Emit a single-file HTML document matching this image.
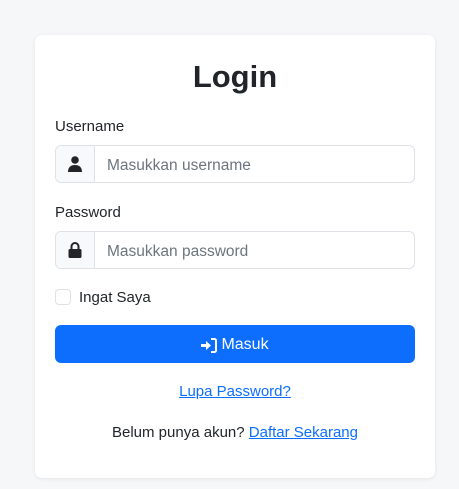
<!DOCTYPE html>
<html><head><style>
*{box-sizing:border-box;margin:0;padding:0}
body{width:459px;height:489px;background:#f6f7f9;font-family:"Liberation Sans",sans-serif;color:#212529;font-size:15px;position:relative;overflow:hidden}
.card{position:absolute;left:35px;top:35px;width:400px;height:443px;background:#fff;border-radius:7px;box-shadow:0 1px 4px rgba(0,0,0,.08)}
.abs{position:absolute}
h1{position:absolute;left:0;width:400px;text-align:center;font-size:31px;font-weight:bold;line-height:40px}
.lbl{position:absolute;left:20px;font-size:15px;line-height:20px}
.ig{position:absolute;left:20px;width:360px;height:38px;border:1px solid #dee2e6;border-radius:6px;display:flex;overflow:hidden}
.ig .ic{width:39px;background:#f8f9fa;border-right:1px solid #dee2e6;display:flex;align-items:center;justify-content:center}
.ig .ph{padding-left:12px;padding-top:2px;line-height:36px;color:#6c757d;font-size:15.5px}
.btn{position:absolute;left:20px;top:290px;width:360px;height:38px;background:#0d6efd;border-radius:6px;color:#fff;display:flex;align-items:center;justify-content:center;font-size:16px;gap:4px;padding-top:2px}
a{color:#0d6efd;text-decoration:underline}
.c{position:absolute;left:0;width:400px;text-align:center;font-size:15px;line-height:20px}
</style></head><body>
<div class="card">
<h1 style="top:22px">Login</h1>
<div class="lbl" style="top:82px">Username</div>
<div class="ig" style="top:110px"><div class="ic"><svg width="14" height="16" viewBox="0 0 14 16"><circle cx="7" cy="4" r="3.8" fill="#212529"/><path d="M0 16C0 11 3 9 7 9s7 2 7 7z" fill="#212529"/></svg></div><div class="ph">Masukkan username</div></div>
<div class="lbl" style="top:168px">Password</div>
<div class="ig" style="top:196px"><div class="ic"><svg width="14" height="16" viewBox="0 0 14 16"><path d="M3.5 7V4.5a3.5 3.5 0 0 1 7 0V7" stroke="#212529" stroke-width="2" fill="none"/><rect x="0.5" y="7" width="13" height="9" rx="1.5" fill="#212529"/></svg></div><div class="ph">Masukkan password</div></div>
<div class="abs" style="left:20px;top:254px;width:16px;height:16px;border:1px solid #dee2e6;border-radius:4px"></div>
<div class="abs" style="left:44px;top:253px;font-size:15px;line-height:20px">Ingat Saya</div>
<div class="btn"><svg width="16" height="15" viewBox="0 0 16 15"><path d="M0 6h5V3l5 4.5-5 4.5V9H0z" fill="#fff"/><path d="M10 1h3.5a1.5 1.5 0 0 1 1.5 1.5v10a1.5 1.5 0 0 1-1.5 1.5H10" stroke="#fff" stroke-width="2" fill="none"/></svg><span>Masuk</span></div>
<div class="c" style="top:347px"><a>Lupa Password?</a></div>
<div class="c" style="top:388px">Belum punya akun? <a>Daftar Sekarang</a></div>
</div>
</body></html>
